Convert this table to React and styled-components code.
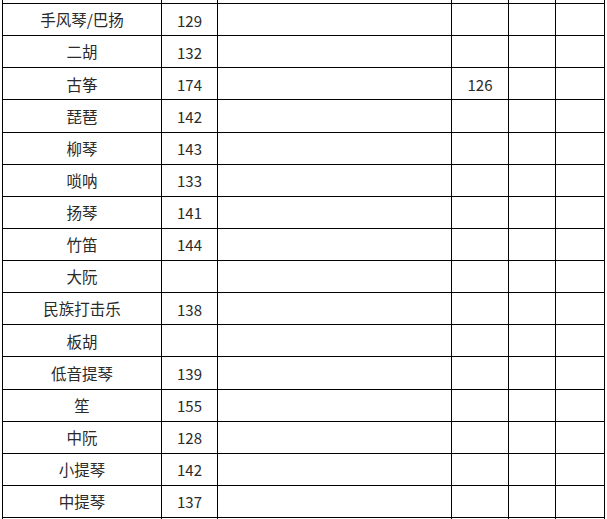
import React from "react";
import styled, { createGlobalStyle } from "styled-components";

const Global = createGlobalStyle`
  html, body { margin: 0; padding: 0; background: #fff; }
  body { font-family: "Noto Sans CJK SC", "Noto Sans", sans-serif; }
`;

const Sheet = styled.div`
  margin-left: 2px;
  width: 603px;
  display: grid;
  grid-template-columns: 159px 56px 234px 57px 47px 49px;
  grid-template-rows: 4px;
  grid-auto-rows: 32.125px;
  align-content: start;
  border-left: 1px solid #000;
  overflow: hidden;
  height: 519px;
`;

const Cell = styled.div`
  box-sizing: border-box;
  border-right: 1px solid #000;
  border-bottom: 1px solid #000;
  display: flex;
  align-items: center;
  justify-content: center;
  font-size: ${(p) => (p.$num ? "15px" : "15.5px")};
  color: #2a2a2a;
  line-height: 1;
  white-space: nowrap;
  padding-top: 1px;
`;

const rows = [
  ["手风琴/巴扬", "129", "", ""],
  ["二胡", "132", "", ""],
  ["古筝", "174", "", "126"],
  ["琵琶", "142", "", ""],
  ["柳琴", "143", "", ""],
  ["唢呐", "133", "", ""],
  ["扬琴", "141", "", ""],
  ["竹笛", "144", "", ""],
  ["大阮", "", "", ""],
  ["民族打击乐", "138", "", ""],
  ["板胡", "", "", ""],
  ["低音提琴", "139", "", ""],
  ["笙", "155", "", ""],
  ["中阮", "128", "", ""],
  ["小提琴", "142", "", ""],
  ["中提琴", "137", "", ""],
  ["", "", "", ""],
];

export default function App() {
  return (
    <>
      <Global />
      <Sheet>
        {Array.from({ length: 6 }).map((_, i) => (
          <Cell key={"h" + i} />
        ))}
        {rows.map((r, ri) => (
          <React.Fragment key={ri}>
            <Cell>{r[0]}</Cell>
            <Cell $num>{r[1]}</Cell>
            <Cell $num>{r[2]}</Cell>
            <Cell $num>{r[3]}</Cell>
            <Cell />
            <Cell />
          </React.Fragment>
        ))}
      </Sheet>
    </>
  );
}
